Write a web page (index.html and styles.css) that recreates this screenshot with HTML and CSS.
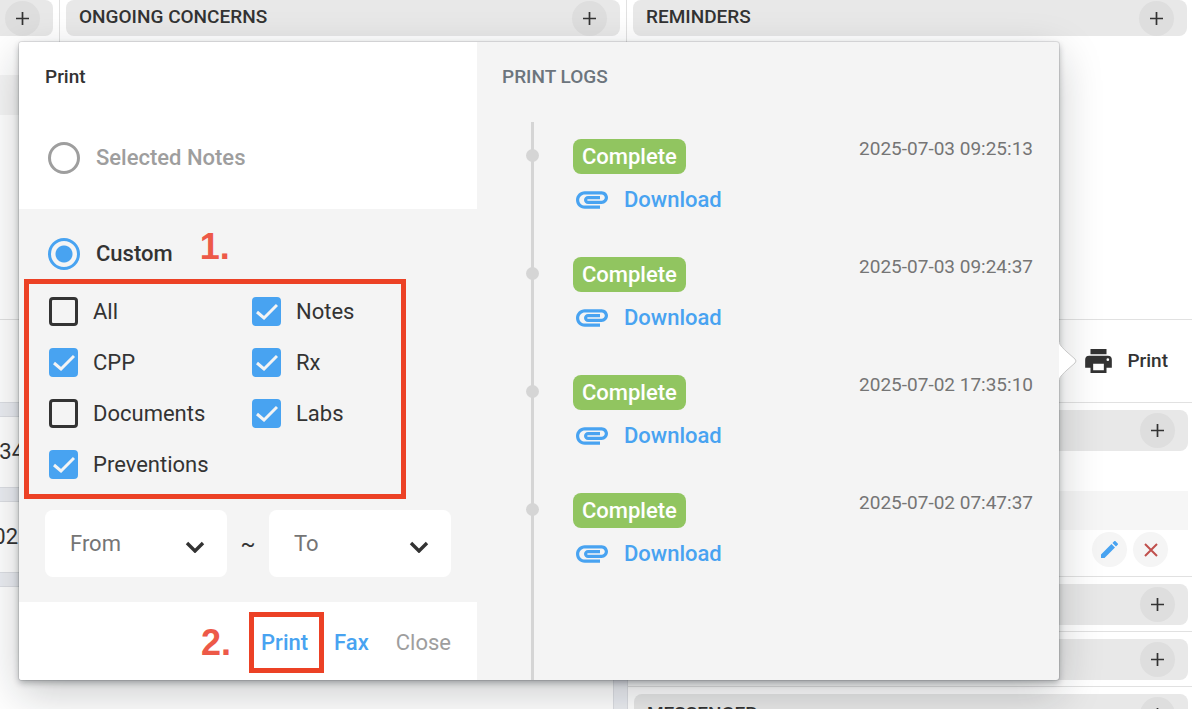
FILE: index.html
```html
<!DOCTYPE html>
<html lang="en">

<head>
    <meta charset="UTF-8">
    <meta name="viewport" content="width=device-width, initial-scale=1.0">
    <title>Print</title>
    <link rel="stylesheet" href="styles.css">
</head>

<body>
    <!-- shared icons -->
    <svg class="sprite" aria-hidden="true">
        <symbol id="plus" viewBox="0 0 13 13">
            <path d="M6.5 0V13M0 6.5H13" fill="none" stroke="currentColor" stroke-width="1.7" />
        </symbol>
        <symbol id="chevron" viewBox="0 0 20 12">
            <path d="M2 2L10 10L18 2" fill="none" stroke="currentColor" stroke-width="3.4" />
        </symbol>
        <symbol id="clip" viewBox="2 7 20 11">
            <path fill="currentColor" d="M2 12.5C2 9.46 4.46 7 7.5 7H18c2.21 0 4 1.79 4 4s-1.79 4-4 4H9.5C8.12 15 7 13.88 7 12.5S8.12 10 9.5 10H17v2H9.41c-.55 0-.55 1 0 1H18c1.1 0 2-.9 2-2s-.9-2-2-2H7.5C5.57 9 4 10.57 4 12.5S5.57 16 7.5 16H17v2H7.5C4.46 18 2 15.54 2 12.5z" />
        </symbol>
    </svg>

    <div class="page">
        <div class="top">
            <section class="column">
                <header class="bar">
                    <button class="round" aria-label="Add"><svg class="plus"><use href="#plus" /></svg></button>
                </header>
                <div class="stripe"></div>
            </section>
            <section class="column">
                <header class="bar">
                    <h2>ONGOING CONCERNS</h2>
                    <button class="round" aria-label="Add"><svg class="plus"><use href="#plus" /></svg></button>
                </header>
            </section>
            <section class="column">
                <header class="bar">
                    <h2>REMINDERS</h2>
                    <button class="round" aria-label="Add"><svg class="plus"><use href="#plus" /></svg></button>
                </header>
            </section>
        </div>

        <div class="main">
            <div class="notes">
                <div class="card first"></div>
                <div class="card"><span class="cell">34</span></div>
                <div class="card"><span class="cell narrow">02</span></div>
                <div class="card rest"></div>
            </div>

            <aside class="side">
                <div class="tools">
                    <button class="tool">
                        <svg class="printer" viewBox="2 3 20 18">
                            <path fill="currentColor" d="M18,3H6V7H18M19,12A1,1 0 0,1 18,11A1,1 0 0,1 19,10A1,1 0 0,1 20,11A1,1 0 0,1 19,12M16,19H8V14H16M19,8H5A3,3 0 0,0 2,11V17H6V21H18V17H22V11A3,3 0 0,0 19,8Z" />
                        </svg>
                        Print
                    </button>
                </div>
                <section class="block">
                    <header class="bar">
                        <button class="round" aria-label="Add"><svg class="plus"><use href="#plus" /></svg></button>
                    </header>
                    <div class="table-head"></div>
                    <div class="actions">
                        <button class="round light" aria-label="Edit">
                            <svg class="pencil" viewBox="3 3 18 18">
                                <path fill="currentColor" d="M20.71,7.04C21.1,6.65 21.1,6 20.71,5.63L18.37,3.29C18,2.9 17.35,2.9 16.96,3.29L15.12,5.12L18.87,8.87M3,17.25V21H6.75L17.81,9.93L14.06,6.18L3,17.25Z" />
                            </svg>
                        </button>
                        <button class="round light" aria-label="Delete">
                            <svg class="cross" viewBox="0 0 14 14">
                                <path d="M1 1L13 13M13 1L1 13" fill="none" stroke="currentColor" stroke-width="2" />
                            </svg>
                        </button>
                    </div>
                </section>
                <section class="block">
                    <header class="bar">
                        <button class="round" aria-label="Add"><svg class="plus"><use href="#plus" /></svg></button>
                    </header>
                </section>
                <section class="block">
                    <header class="bar">
                        <button class="round" aria-label="Add"><svg class="plus"><use href="#plus" /></svg></button>
                    </header>
                </section>
                <section class="block">
                    <header class="bar">
                        <h2>MESSENGER</h2>
                        <button class="round" aria-label="Add"><svg class="plus"><use href="#plus" /></svg></button>
                    </header>
                </section>
            </aside>
        </div>
    </div>

    <div class="popover">
        <form class="settings">
            <div class="selected">
                <h3>Print</h3>
                <label class="choice muted">
                    <input type="radio" name="mode" value="selected">
                    Selected Notes
                </label>
            </div>

            <div class="custom">
                <div class="custom-row">
                    <label class="choice">
                        <input type="radio" name="mode" value="custom" checked>
                        Custom
                    </label>
                    <span class="step">1.</span>
                </div>
                <div class="options">
                    <label><input type="checkbox" name="all"><svg class="tick" viewBox="0 0 22 17"><path d="M1 9L8 15L21 2" /></svg>All</label>
                    <label><input type="checkbox" name="notes" checked><svg class="tick" viewBox="0 0 22 17"><path d="M1 9L8 15L21 2" /></svg>Notes</label>
                    <label><input type="checkbox" name="cpp" checked><svg class="tick" viewBox="0 0 22 17"><path d="M1 9L8 15L21 2" /></svg>CPP</label>
                    <label><input type="checkbox" name="rx" checked><svg class="tick" viewBox="0 0 22 17"><path d="M1 9L8 15L21 2" /></svg>Rx</label>
                    <label><input type="checkbox" name="documents"><svg class="tick" viewBox="0 0 22 17"><path d="M1 9L8 15L21 2" /></svg>Documents</label>
                    <label><input type="checkbox" name="labs" checked><svg class="tick" viewBox="0 0 22 17"><path d="M1 9L8 15L21 2" /></svg>Labs</label>
                    <label><input type="checkbox" name="preventions" checked><svg class="tick" viewBox="0 0 22 17"><path d="M1 9L8 15L21 2" /></svg>Preventions</label>
                </div>
                <div class="range">
                    <div class="select">
                        <select name="from" aria-label="From">
                            <option>From</option>
                        </select>
                        <svg class="chevron"><use href="#chevron" /></svg>
                    </div>
                    <span class="tilde">~</span>
                    <div class="select">
                        <select name="to" aria-label="To">
                            <option>To</option>
                        </select>
                        <svg class="chevron"><use href="#chevron" /></svg>
                    </div>
                </div>
            </div>

            <div class="footer">
                <span class="step">2.</span>
                <button type="button" class="action marked">Print</button>
                <button type="button" class="action">Fax</button>
                <button type="button" class="action close">Close</button>
            </div>
        </form>

        <div class="logs">
            <h3>PRINT LOGS</h3>
            <ul class="timeline">
                <li>
                    <div class="state">
                        <span class="badge">Complete</span>
                        <a href="#"><svg class="clip"><use href="#clip" /></svg>Download</a>
                    </div>
                    <time>2025-07-03 09:25:13</time>
                </li>
                <li>
                    <div class="state">
                        <span class="badge">Complete</span>
                        <a href="#"><svg class="clip"><use href="#clip" /></svg>Download</a>
                    </div>
                    <time>2025-07-03 09:24:37</time>
                </li>
                <li>
                    <div class="state">
                        <span class="badge">Complete</span>
                        <a href="#"><svg class="clip"><use href="#clip" /></svg>Download</a>
                    </div>
                    <time>2025-07-02 17:35:10</time>
                </li>
                <li>
                    <div class="state">
                        <span class="badge">Complete</span>
                        <a href="#"><svg class="clip"><use href="#clip" /></svg>Download</a>
                    </div>
                    <time>2025-07-02 07:47:37</time>
                </li>
            </ul>
        </div>

        <svg class="arrow" viewBox="0 0 20 40">
            <path d="M0 1C1 5 4 7 8 11L16 18Q18 20 16 22L8 29C4 33 1 35 0 39" />
        </svg>
    </div>
</body>

</html>
```

FILE: styles.css
```css
* {
    box-sizing: border-box;
}
body {
    margin: 0;
    height: 100vh;
    overflow: hidden;
    position: relative;
    font-family: Roboto, "Liberation Sans", sans-serif;
    font-size: 22px;
    line-height: 26px;
    color: #333;
    background: #ebedf2;
}
h2, h3 {
    margin: 0;
    font-size: 19px;
    font-weight: 500;
    line-height: 24px;
}
button {
    padding: 0;
    border: 0;
    background: none;
    font: inherit;
    color: inherit;
}
svg {
    display: block;
    flex: none;
}
.sprite {
    position: absolute;
    width: 0;
    height: 0;
}

/* page behind the popover */
.page {
    display: flex;
    flex-direction: column;
    height: 100%;
}
.top {
    display: grid;
    grid-template-columns: 60px 1fr 565px;
    height: 320px;
    flex: none;
    background: #fff;
    border-bottom: 1px solid #e1e1e1;
}
.column {
    padding: 0 6px;
    border-right: 1px solid #e1e1e1;
}
.column:first-child {
    padding-left: 0;
}
.column:last-child {
    padding-right: 5px;
    border-right: 0;
}
.bar {
    display: flex;
    align-items: center;
    height: 41px;
    padding: 0 13px;
    border-radius: 8px;
    background: #e8e8e8;
}
.bar h2 {
    padding-bottom: 2px;
}
.top .bar {
    height: 36px;
}
.top .column:first-child .bar {
    padding-left: 0;
    border-radius: 0 8px 8px 0;
}
.stripe {
    height: 40px;
    margin-top: 39px;
    background: #f5f5f5;
}
.round {
    display: flex;
    align-items: center;
    justify-content: center;
    width: 35px;
    height: 35px;
    margin-left: auto;
    flex: none;
    border-radius: 50%;
    background: #dedede;
}
.plus {
    width: 13px;
    height: 13px;
}
.main {
    display: grid;
    grid-template-columns: 1fr 565px;
    gap: 13px;
    flex: 1;
    min-height: 0;
}
.notes {
    display: flex;
    flex-direction: column;
    gap: 13px;
}
.card {
    display: flex;
    align-items: center;
    height: 72px;
    flex: none;
    background: #fff;
    border: 1px solid #dcdee3;
    border-left: 0;
}
.card.first {
    height: 83px;
    border-top: 0;
}
.card.rest {
    flex: 1;
    border-bottom: 0;
}
.cell {
    display: flex;
    justify-content: flex-end;
    width: 24px;
}
.cell.narrow {
    width: 18px;
}
.side {
    background: #fff;
    border-left: 1px solid #dcdee3;
    overflow: hidden;
}
.tools {
    display: flex;
    justify-content: flex-end;
    align-items: center;
    height: 82px;
    padding-right: 24px;
}
.tool {
    display: flex;
    align-items: center;
    gap: 15px;
    font-size: 19px;
    font-weight: 500;
}
.printer {
    width: 27px;
    height: 24px;
}
.block {
    padding: 7px 4px 6px 6px;
    border-top: 1px solid #e1e1e1;
}
.block:nth-child(2) {
    padding-bottom: 0;
}
.table-head {
    height: 39px;
    margin-top: 40px;
    background: #f6f6f6;
}
.actions {
    display: flex;
    justify-content: flex-end;
    gap: 6px;
    padding: 2px 20px 9px 0;
}
.round.light {
    margin: 0;
    background: #f5f5f5;
}
.pencil {
    width: 17px;
    height: 17px;
    color: #48a3f1;
}
.cross {
    width: 14px;
    height: 14px;
    color: #c0504d;
}

/* popover */
.popover {
    position: absolute;
    top: 42px;
    left: 19px;
    right: 133px;
    display: grid;
    grid-template-columns: 458px 1fr;
    border-radius: 3px;
    background: #f4f4f4;
    box-shadow: 0 0 0 1px rgba(16, 22, 26, .1), 0 3px 6px rgba(16, 22, 26, .3), 0 14px 44px rgba(16, 22, 26, .22);
}
.arrow {
    position: absolute;
    left: 100%;
    top: 299px;
    width: 20px;
    height: 40px;
}
.arrow path {
    fill: #fff;
    stroke: #c8c8c8;
    stroke-width: 1;
}
.selected {
    padding: 23px 26px 35px;
    background: #fff;
    border-radius: 3px 0 0 0;
}
.choice {
    display: flex;
    align-items: center;
    gap: 16px;
    padding-left: 3px;
    font-weight: 500;
}
.selected .choice {
    margin-top: 53px;
}
.muted {
    color: #9e9e9e;
}
input {
    appearance: none;
    margin: 0;
    flex: none;
}
input[type=radio] {
    width: 32px;
    height: 32px;
    border: 3px solid #9e9e9e;
    border-radius: 50%;
}
input[type=radio]:checked {
    border-color: #48a3f1;
    background: radial-gradient(#48a3f1 0 8px, transparent 9px);
}
.custom {
    padding: 29px 26px 25px 5px;
}
.custom-row {
    display: flex;
    align-items: flex-start;
    gap: 27px;
    padding-left: 21px;
}
.step {
    font-family: "Liberation Sans", sans-serif;
    font-size: 36px;
    font-weight: 700;
    line-height: 17px;
    color: #ed5948;
}
.options {
    display: grid;
    grid-template-columns: 203px 1fr;
    grid-auto-rows: 51px;
    width: 382px;
    margin-top: 9px;
    padding: 2px 0 4px 20px;
    border: 5px solid #ec4125;
}
.options label {
    position: relative;
    display: flex;
    align-items: center;
    gap: 15px;
}
input[type=checkbox] {
    width: 29px;
    height: 29px;
    border: 3px solid #333;
    border-radius: 4px;
}
input[type=checkbox]:checked {
    border-color: #48a3f1;
    background: #48a3f1;
}
.tick {
    display: none;
    position: absolute;
    left: 4px;
    width: 22px;
    height: 17px;
    fill: none;
    stroke: #f4f4f4;
    stroke-width: 3;
    pointer-events: none;
}
input:checked + .tick {
    display: block;
}
.range {
    display: flex;
    align-items: center;
    margin-top: 11px;
    padding-left: 21px;
}
.select {
    position: relative;
    flex: 1;
}
select {
    appearance: none;
    display: block;
    width: 100%;
    height: 67px;
    padding: 0 25px;
    border: 0;
    border-radius: 8px;
    background: #fff;
    font: inherit;
    color: #757575;
}
.chevron {
    position: absolute;
    right: 22px;
    top: 31px;
    width: 20px;
    height: 12px;
    pointer-events: none;
}
.tilde {
    width: 42px;
    text-align: center;
}
.footer {
    display: flex;
    justify-content: flex-end;
    align-items: center;
    padding: 10px 26px 7px;
    background: #fff;
    border-radius: 0 0 0 3px;
}
.footer .step {
    margin-right: 18px;
}
.action {
    font-weight: 500;
    color: #48a3f1;
}
.action.marked {
    height: 61px;
    margin-right: 10px;
    padding: 0 11px 0 7px;
    border: 5px solid #ec4125;
}
.action.close {
    margin-left: 27px;
    font-weight: 400;
    color: #9e9e9e;
}

/* print logs */
.logs {
    display: flex;
    flex-direction: column;
    padding: 23px 26px 0 25px;
}
.logs h3 {
    color: #6c757d;
}
.timeline {
    flex: 1;
    margin: 33px 0 0 29px;
    padding: 17px 0 0 39px;
    border-left: 3px solid #d5d5d5;
    list-style: none;
}
.timeline li {
    position: relative;
    display: flex;
    justify-content: space-between;
    height: 118px;
}
.timeline li::before {
    content: "";
    position: absolute;
    left: -47px;
    top: 10px;
    width: 13px;
    height: 13px;
    border-radius: 50%;
    background: #d5d5d5;
}
.badge {
    display: block;
    padding: 0 9px;
    border-radius: 8px;
    line-height: 35px;
    font-weight: 500;
    color: #fff;
    background: #91c560;
}
.state a {
    display: flex;
    align-items: center;
    gap: 16px;
    margin-top: 13px;
    padding-left: 3px;
    font-weight: 500;
    color: #48a3f1;
    text-decoration: none;
}
.state {
    display: flex;
    flex-direction: column;
    align-items: flex-start;
}
.clip {
    width: 32px;
    height: 18px;
}
time {
    font-size: 19px;
    line-height: 20px;
    color: #757575;
}
```
